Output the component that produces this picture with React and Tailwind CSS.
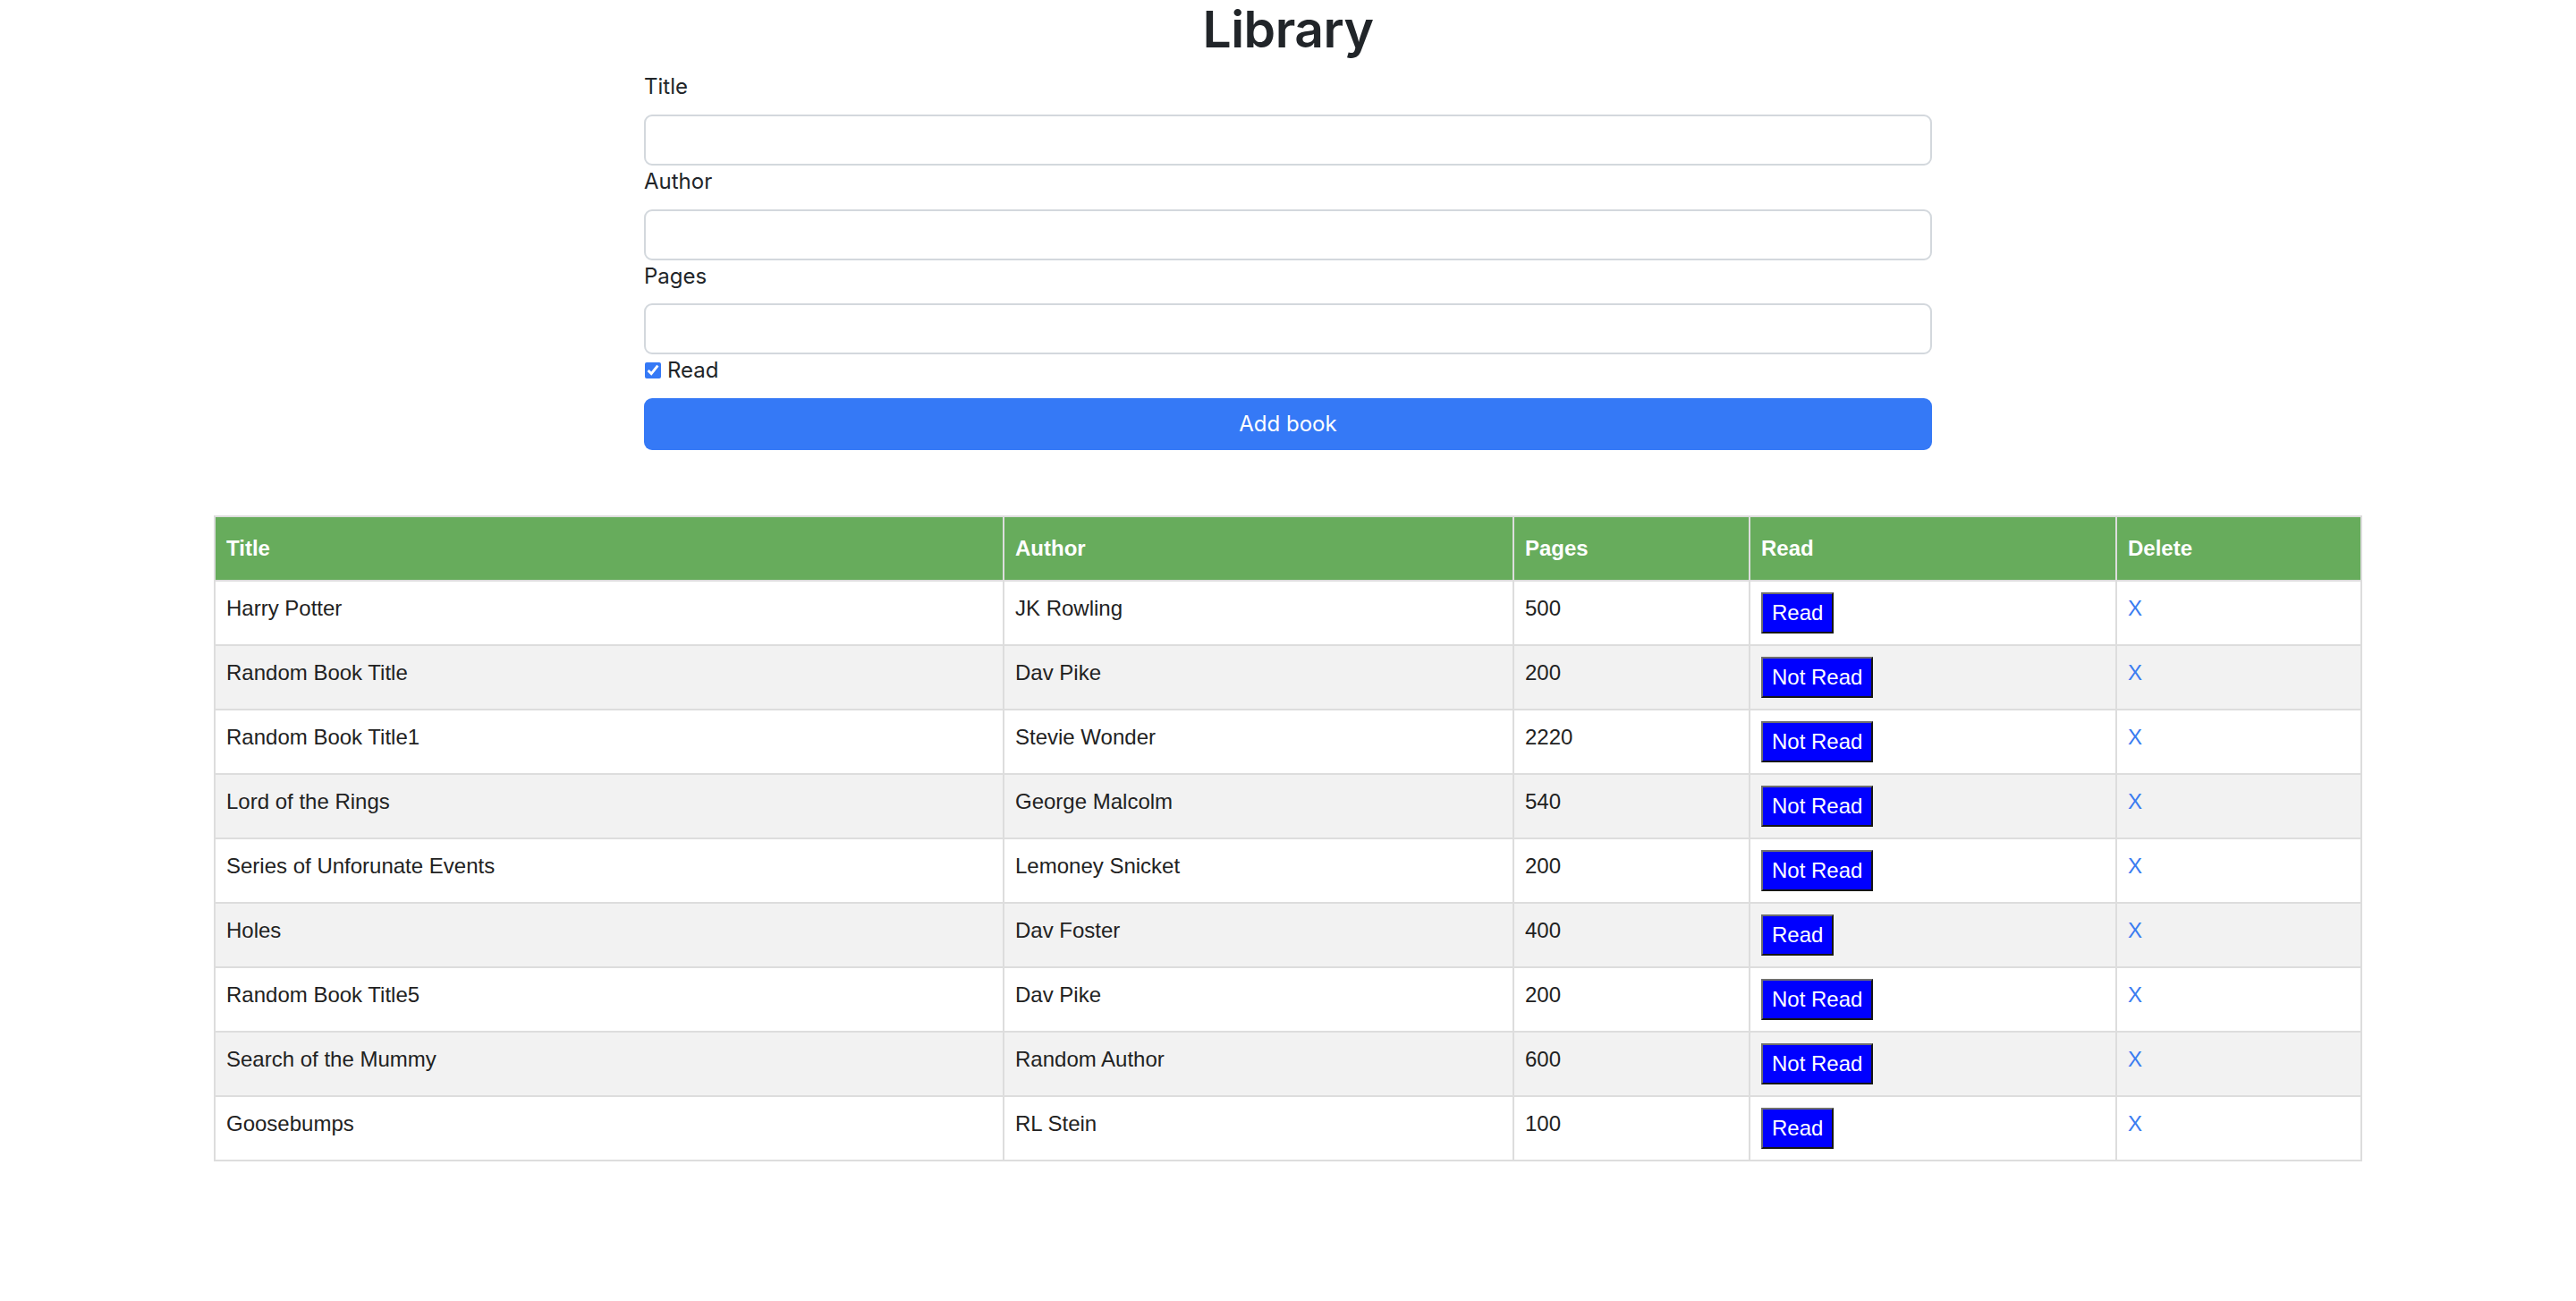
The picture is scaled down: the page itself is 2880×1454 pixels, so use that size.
import React, { useState } from "react";

const initialBooks = [
  { title: "Harry Potter", author: "JK Rowling", pages: 500, read: true },
  { title: "Random Book Title", author: "Dav Pike", pages: 200, read: false },
  { title: "Random Book Title1", author: "Stevie Wonder", pages: 2220, read: false },
  { title: "Lord of the Rings", author: "George Malcolm", pages: 540, read: false },
  { title: "Series of Unforunate Events", author: "Lemoney Snicket", pages: 200, read: false },
  { title: "Holes", author: "Dav Foster", pages: 400, read: true },
  { title: "Random Book Title5", author: "Dav Pike", pages: 200, read: false },
  { title: "Search of the Mummy", author: "Random Author", pages: 600, read: false },
  { title: "Goosebumps", author: "RL Stein", pages: 100, read: true },
];

const App = () => {
  const [books, setBooks] = useState(initialBooks);
  const [title, setTitle] = useState("");
  const [author, setAuthor] = useState("");
  const [pages, setPages] = useState("");
  const [read, setRead] = useState(true);

  const handleSubmit = (e) => {
    e.preventDefault();
    if (!title) return;
    setBooks([...books, { title, author, pages: Number(pages) || 0, read }]);
    setTitle("");
    setAuthor("");
    setPages("");
  };

  const toggleRead = (i) => {
    setBooks(books.map((b, idx) => (idx === i ? { ...b, read: !b.read } : b)));
  };

  const deleteBook = (i) => {
    setBooks(books.filter((_, idx) => idx !== i));
  };

  const inputClass =
    "block w-full h-[57px] px-4 text-[24px] text-[#212529] bg-white border-2 border-[#d3d8dd] rounded-[9px] outline-none";

  return (
    <div className="min-h-screen bg-white font-['Inter','Liberation_Sans',sans-serif] text-[#212529]">
      <h1 className="text-center text-[57px] leading-[66px] font-semibold tracking-[-0.5px]">Library</h1>

      <form onSubmit={handleSubmit} className="w-[1440px] mx-auto mt-[13px]">
        <label htmlFor="title" className="block text-[24px] leading-9 mb-[13px]">
          Title
        </label>
        <input id="title" type="text" value={title} onChange={(e) => setTitle(e.target.value)} className={inputClass} />

        <label htmlFor="author" className="block text-[24px] leading-9 mb-[13px]">
          Author
        </label>
        <input id="author" type="text" value={author} onChange={(e) => setAuthor(e.target.value)} className={inputClass} />

        <label htmlFor="pages" className="block text-[24px] leading-9 mb-[12px]">
          Pages
        </label>
        <input id="pages" type="number" value={pages} onChange={(e) => setPages(e.target.value)} className={inputClass} />

        <div className="flex items-center h-9 gap-[7px]">
          <input
            id="read"
            type="checkbox"
            checked={read}
            onChange={(e) => setRead(e.target.checked)}
            className="w-[18px] h-[18px] m-0 ml-px accent-[#3579f6]"
          />
          <label htmlFor="read" className="text-[24px] leading-9">
            Read
          </label>
        </div>

        <button
          type="submit"
          className="block w-full h-[58px] mt-[13px] rounded-[9px] bg-[#3579f6] text-white text-[24px] leading-9"
        >
          Add book
        </button>
      </form>

      <table className="w-[2400px] mx-auto mt-[73px] table-fixed border-collapse border-2 border-[#dddddd] font-['Liberation_Sans',Arial,sans-serif] text-[24px] leading-9 text-[#222]">
        <colgroup>
          <col className="w-[882px]" />
          <col className="w-[570px]" />
          <col className="w-[264px]" />
          <col className="w-[410px]" />
          <col className="w-[274px]" />
        </colgroup>
        <thead>
          <tr className="bg-[#67ac5c] text-white">
            <th className="border-2 border-[#dddddd] px-3 py-[17px] text-left font-bold">Title</th>
            <th className="border-2 border-[#dddddd] px-3 py-[17px] text-left font-bold">Author</th>
            <th className="border-2 border-[#dddddd] px-3 py-[17px] text-left font-bold">Pages</th>
            <th className="border-2 border-[#dddddd] px-3 py-[17px] text-left font-bold">Read</th>
            <th className="border-2 border-[#dddddd] px-3 py-[17px] text-left font-bold">Delete</th>
          </tr>
        </thead>
        <tbody>
          {books.map((book, i) => (
            <tr key={i} className={i % 2 === 1 ? "bg-[#f2f2f2]" : "bg-white"}>
              <td className="border-2 border-[#dddddd] px-3 py-3 align-top">{book.title}</td>
              <td className="border-2 border-[#dddddd] px-3 py-3 align-top">{book.author}</td>
              <td className="border-2 border-[#dddddd] px-3 py-3 align-top">{book.pages}</td>
              <td className="border-2 border-[#dddddd] px-3 py-3 align-top">
                <button
                  type="button"
                  onClick={() => toggleRead(i)}
                  className="block bg-[#0000ff] text-white px-[10px] py-[7px] leading-[28px] border-2 border-t-[#6f6f6f] border-l-[#6f6f6f] border-r-[#161616] border-b-[#161616]"
                >
                  {book.read ? "Read" : "Not Read"}
                </button>
              </td>
              <td className="border-2 border-[#dddddd] px-3 py-3 align-top">
                <button
                  type="button"
                  onClick={() => deleteBook(i)}
                  className="text-[#3a7cf0] leading-9"
                >
                  X
                </button>
              </td>
            </tr>
          ))}
        </tbody>
      </table>
    </div>
  );
};

export default App;
